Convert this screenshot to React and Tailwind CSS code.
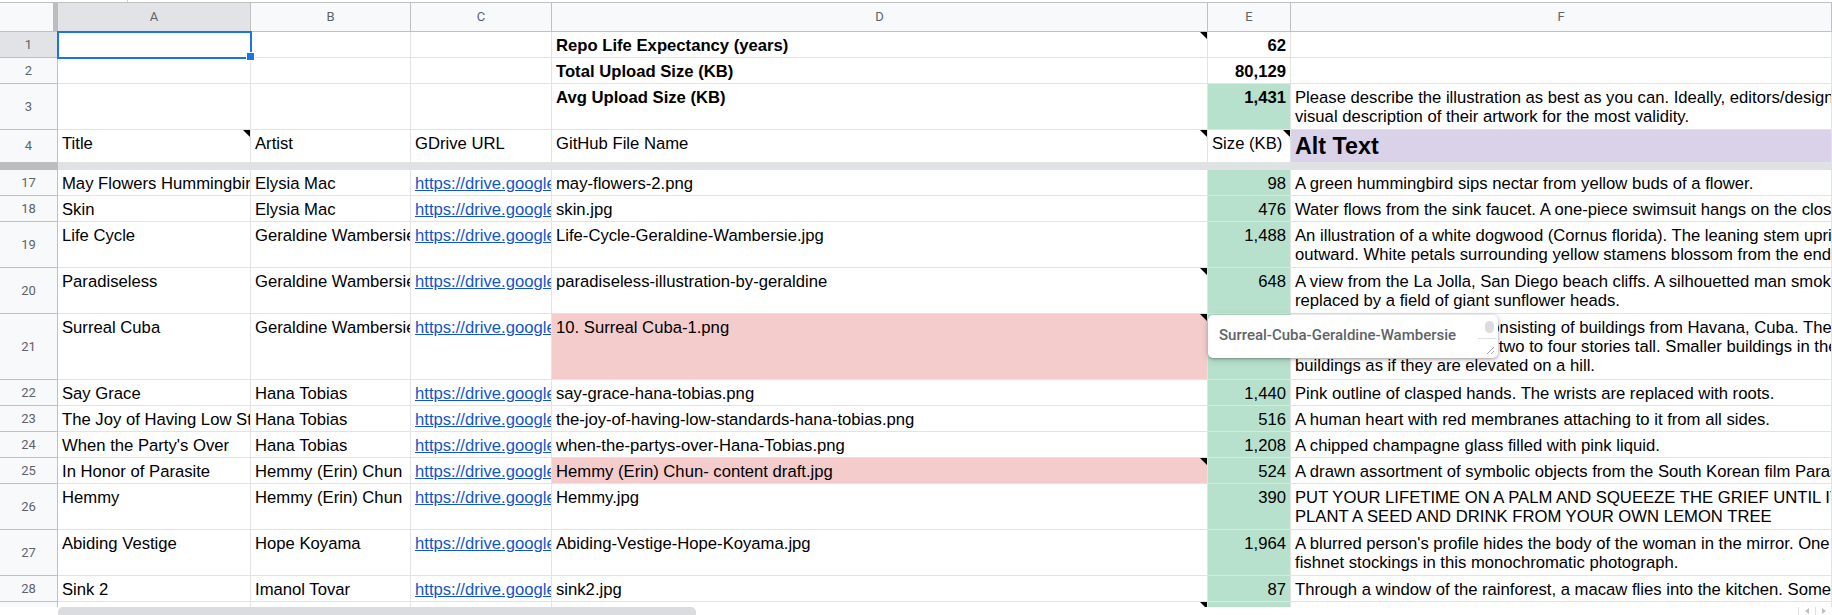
import React from 'react';

const rows = [
  { n: 17, h: 'h-[26px]', a: 'May Flowers Hummingbird', b: 'Elysia Mac', d: 'may-flowers-2.png', e: '98', f: ['A green hummingbird sips nectar from yellow buds of a flower.'] },
  { n: 18, h: 'h-[26px]', a: 'Skin', b: 'Elysia Mac', d: 'skin.jpg', e: '476', f: ['Water flows from the sink faucet. A one-piece swimsuit hangs on the closet door.'] },
  { n: 19, h: 'h-[46px]', a: 'Life Cycle', b: 'Geraldine Wambersie', d: 'Life-Cycle-Geraldine-Wambersie.jpg', e: '1,488', f: ['An illustration of a white dogwood (Cornus florida). The leaning stem upright and branches', 'outward. White petals surrounding yellow stamens blossom from the ends of the branches.'] },
  { n: 20, h: 'h-[46px]', a: 'Paradiseless', b: 'Geraldine Wambersie', d: 'paradiseless-illustration-by-geraldine', dNote: true, e: '648', f: ['A view from the La Jolla, San Diego beach cliffs. A silhouetted man smokes while the ocean is', 'replaced by a field of giant sunflower heads.'] },
  { n: 21, h: 'h-[66px]', a: 'Surreal Cuba', b: 'Geraldine Wambersie', d: '10. Surreal Cuba-1.png', dPink: true, dNote: true, e: '1,105', f: ['Surreal digital landscape consisting of buildings from Havana, Cuba. The', 'The old houses range from two to four stories tall. Smaller buildings in the front frame the', 'buildings as if they are elevated on a hill.'] },
  { n: 22, h: 'h-[26px]', a: 'Say Grace', b: 'Hana Tobias', d: 'say-grace-hana-tobias.png', e: '1,440', f: ['Pink outline of clasped hands. The wrists are replaced with roots.'] },
  { n: 23, h: 'h-[26px]', a: 'The Joy of Having Low Standards', b: 'Hana Tobias', d: 'the-joy-of-having-low-standards-hana-tobias.png', e: '516', f: ['A human heart with red membranes attaching to it from all sides.'] },
  { n: 24, h: 'h-[26px]', a: "When the Party's Over", b: 'Hana Tobias', d: 'when-the-partys-over-Hana-Tobias.png', e: '1,208', f: ['A chipped champagne glass filled with pink liquid.'] },
  { n: 25, h: 'h-[26px]', a: 'In Honor of Parasite', b: 'Hemmy (Erin) Chun', d: 'Hemmy (Erin) Chun- content draft.jpg', dPink: true, dNote: true, e: '524', f: ['A drawn assortment of symbolic objects from the South Korean film Parasite.'] },
  { n: 26, h: 'h-[46px]', a: 'Hemmy', b: 'Hemmy (Erin) Chun', d: 'Hemmy.jpg', e: '390', f: ['PUT YOUR LIFETIME ON A PALM AND SQUEEZE THE GRIEF UNTIL IT', 'PLANT A SEED AND DRINK FROM YOUR OWN LEMON TREE'] },
  { n: 27, h: 'h-[46px]', a: 'Abiding Vestige', b: 'Hope Koyama', d: 'Abiding-Vestige-Hope-Koyama.jpg', e: '1,964', f: ["A blurred person's profile hides the body of the woman in the mirror. One leg wears", 'fishnet stockings in this monochromatic photograph.'] },
  { n: 28, h: 'h-[26px]', a: 'Sink 2', b: 'Imanol Tovar', d: 'sink2.jpg', e: '87', f: ['Through a window of the rainforest, a macaw flies into the kitchen. Something else'] },
  { n: 29, h: 'h-[26px]', a: '', b: '', d: '', dNote: true, e: '', f: [''] },
];

const Note = () => (
  <div className="absolute top-0 right-0 w-0 h-0 border-t-[7px] border-l-[7px] border-t-black border-l-transparent" />
);

const Cell = ({ w, className = '', note, children }) => (
  <div className={`relative shrink-0 h-full border-r border-b border-[#e2e3e3] overflow-hidden ${w} ${className}`}>
    {children}
    {note && <Note />}
  </div>
);

const Text = ({ className = '', children }) => (
  <div className={`pt-[4px] pl-[4px] pr-[2px] leading-[19px] text-[16.67px] whitespace-nowrap ${className}`}>{children}</div>
);

const RowHead = ({ n, selected }) => (
  <div className={`shrink-0 w-[58px] h-full flex items-center justify-center border-r border-b border-[#c0c0c0] text-[13px] text-[#5f6368] font-['Roboto',Arial,sans-serif] ${selected ? 'bg-[#e1e3e6]' : 'bg-[#f8f9fa]'}`}>
    {n}
  </div>
);

const ColHead = ({ w, label, selected, grow }) => (
  <div className={`shrink-0 h-full flex items-center justify-center border-r border-b border-[#c0c0c0] text-[13px] text-[#5f6368] font-['Roboto',Arial,sans-serif] ${grow ? 'flex-1 shrink' : w} ${selected ? 'bg-[#e1e3e6]' : 'bg-[#f8f9fa]'}`}>
    {label}
  </div>
);

export default function App() {
  return (
    <div className="relative w-[1832px] h-[615px] overflow-hidden bg-white text-black font-['Liberation_Sans',Arial,sans-serif]">
      {/* strip under formula bar */}
      <div className="h-[3px] border-b border-[#c0c0c0] flex">
        <div className="w-[128px] h-full border-r border-[#d0d0d0]" />
      </div>

      {/* column headers */}
      <div className="flex h-[29px]">
        <div className="shrink-0 w-[58px] h-full flex bg-[#f8f9fa] border-b border-[#c0c0c0]">
          <div className="flex-1" />
          <div className="w-[5px] h-full bg-[#bdbdbd]" />
        </div>
        <ColHead w="w-[193px]" label="A" selected />
        <ColHead w="w-[160px]" label="B" />
        <ColHead w="w-[141px]" label="C" />
        <ColHead w="w-[656px]" label="D" />
        <ColHead w="w-[83px]" label="E" />
        <ColHead label="F" grow />
      </div>

      {/* row 1 */}
      <div className="flex h-[26px]">
        <RowHead n={1} selected />
        <Cell w="w-[193px]" className="overflow-visible">
          <div className="absolute -left-[1px] -top-[1px] w-[195px] h-[28px] border-2 border-[#1a73e8] z-10" />
          <div className="absolute left-[188px] top-[20px] w-[9px] h-[9px] bg-[#1a73e8] border border-white z-10" />
        </Cell>
        <Cell w="w-[160px]" />
        <Cell w="w-[141px]" />
        <Cell w="w-[656px]" note>
          <Text className="font-bold">Repo Life Expectancy (years)</Text>
        </Cell>
        <Cell w="w-[83px]">
          <Text className="font-bold text-right pr-[4px]">62</Text>
        </Cell>
        <Cell w="flex-1 shrink" />
      </div>

      {/* row 2 */}
      <div className="flex h-[26px]">
        <RowHead n={2} />
        <Cell w="w-[193px]" />
        <Cell w="w-[160px]" />
        <Cell w="w-[141px]" />
        <Cell w="w-[656px]">
          <Text className="font-bold">Total Upload Size (KB)</Text>
        </Cell>
        <Cell w="w-[83px]">
          <Text className="font-bold text-right pr-[4px]">80,129</Text>
        </Cell>
        <Cell w="flex-1 shrink" />
      </div>

      {/* row 3 */}
      <div className="flex h-[46px]">
        <RowHead n={3} />
        <Cell w="w-[193px]" />
        <Cell w="w-[160px]" />
        <Cell w="w-[141px]" />
        <Cell w="w-[656px]">
          <Text className="font-bold">Avg Upload Size (KB)</Text>
        </Cell>
        <Cell w="w-[83px]" className="bg-[#b7e1cd]">
          <Text className="font-bold text-right pr-[4px]">1,431</Text>
        </Cell>
        <Cell w="flex-1 shrink">
          <Text>
            <div>Please describe the illustration as best as you can. Ideally, editors/designers should provide a</div>
            <div>visual description of their artwork for the most validity.</div>
          </Text>
        </Cell>
      </div>

      {/* row 4 */}
      <div className="flex h-[33px]">
        <RowHead n={4} />
        <Cell w="w-[193px]" note><Text>Title</Text></Cell>
        <Cell w="w-[160px]"><Text>Artist</Text></Cell>
        <Cell w="w-[141px]"><Text>GDrive URL</Text></Cell>
        <Cell w="w-[656px]" note><Text>GitHub File Name</Text></Cell>
        <Cell w="w-[83px]" note><Text>Size (KB)</Text></Cell>
        <Cell w="flex-1 shrink" className="bg-[#d9d2e9] flex items-center">
          <div className="pl-[4px] text-[23.3px] font-bold leading-[26px] whitespace-nowrap">Alt Text</div>
        </Cell>
      </div>

      {/* frozen rows divider */}
      <div className="flex h-[7px]">
        <div className="shrink-0 w-[58px] h-full bg-[#bdbdbd]" />
        <div className="flex-1 h-full bg-[#dfe1e5]" />
      </div>

      {rows.map((r) => (
        <div key={r.n} className={`flex ${r.h}`}>
          <RowHead n={r.n} />
          <Cell w="w-[193px]"><Text>{r.a}</Text></Cell>
          <Cell w="w-[160px]"><Text>{r.b}</Text></Cell>
          <Cell w="w-[141px]">
            {r.a && <Text className="text-[#1155cc] underline">https://drive.google.com/file/d/</Text>}
          </Cell>
          <Cell w="w-[656px]" note={r.dNote} className={r.dPink ? 'bg-[#f4cccc]' : ''}>
            <Text>{r.d}</Text>
          </Cell>
          <Cell w="w-[83px]" className="bg-[#b7e1cd]">
            <Text className="text-right pr-[4px]">{r.e}</Text>
          </Cell>
          <Cell w="flex-1 shrink">
            <Text>
              {r.f.map((line, i) => (
                <div key={i}>{line}</div>
              ))}
            </Text>
          </Cell>
        </div>
      ))}

      {/* note editor popup */}
      <div className="absolute left-[1208px] top-[315px] w-[290px] h-[43px] bg-white rounded-[5px] shadow-[0_1px_3px_rgba(0,0,0,0.3),0_2px_8px_rgba(0,0,0,0.15)] z-20">
        <div className="absolute left-[11px] top-[11px] text-[15px] leading-[19px] font-medium text-[#5f6368] font-['Roboto',Arial,sans-serif] whitespace-nowrap">
          Surreal-Cuba-Geraldine-Wambersie
        </div>
        <div className="absolute right-[4px] top-[6px] w-[9px] h-[12px] rounded-full bg-[#dadce0]" />
        <div className="absolute right-[2px] top-[23px] w-[18px] h-px bg-[#e0e0e0]" />
        <svg className="absolute right-[3px] bottom-[3px]" width="9" height="9" viewBox="0 0 9 9">
          <path d="M8 1 L1 8 M8 5 L5 8" stroke="#9aa0a6" strokeWidth="1" fill="none" />
        </svg>
      </div>

      {/* horizontal scrollbar */}
      <div className="absolute left-0 right-0 top-[607px] h-[8px] bg-white z-10 flex">
        <div className="ml-[58px] w-[638px] h-[10px] rounded-t-[5px] bg-[#dadce0]" />
        <div className="flex-1" />
        <div className="w-[17px] h-full flex items-center justify-center border-l border-[#e0e0e0]">
          <div className="w-0 h-0 border-y-[3px] border-y-transparent border-r-[4px] border-r-[#bdc1c6]" />
        </div>
        <div className="w-[17px] h-full flex items-center justify-center border-l border-[#e0e0e0]">
          <div className="w-0 h-0 border-y-[3px] border-y-transparent border-l-[4px] border-l-[#bdc1c6]" />
        </div>
      </div>
    </div>
  );
}
